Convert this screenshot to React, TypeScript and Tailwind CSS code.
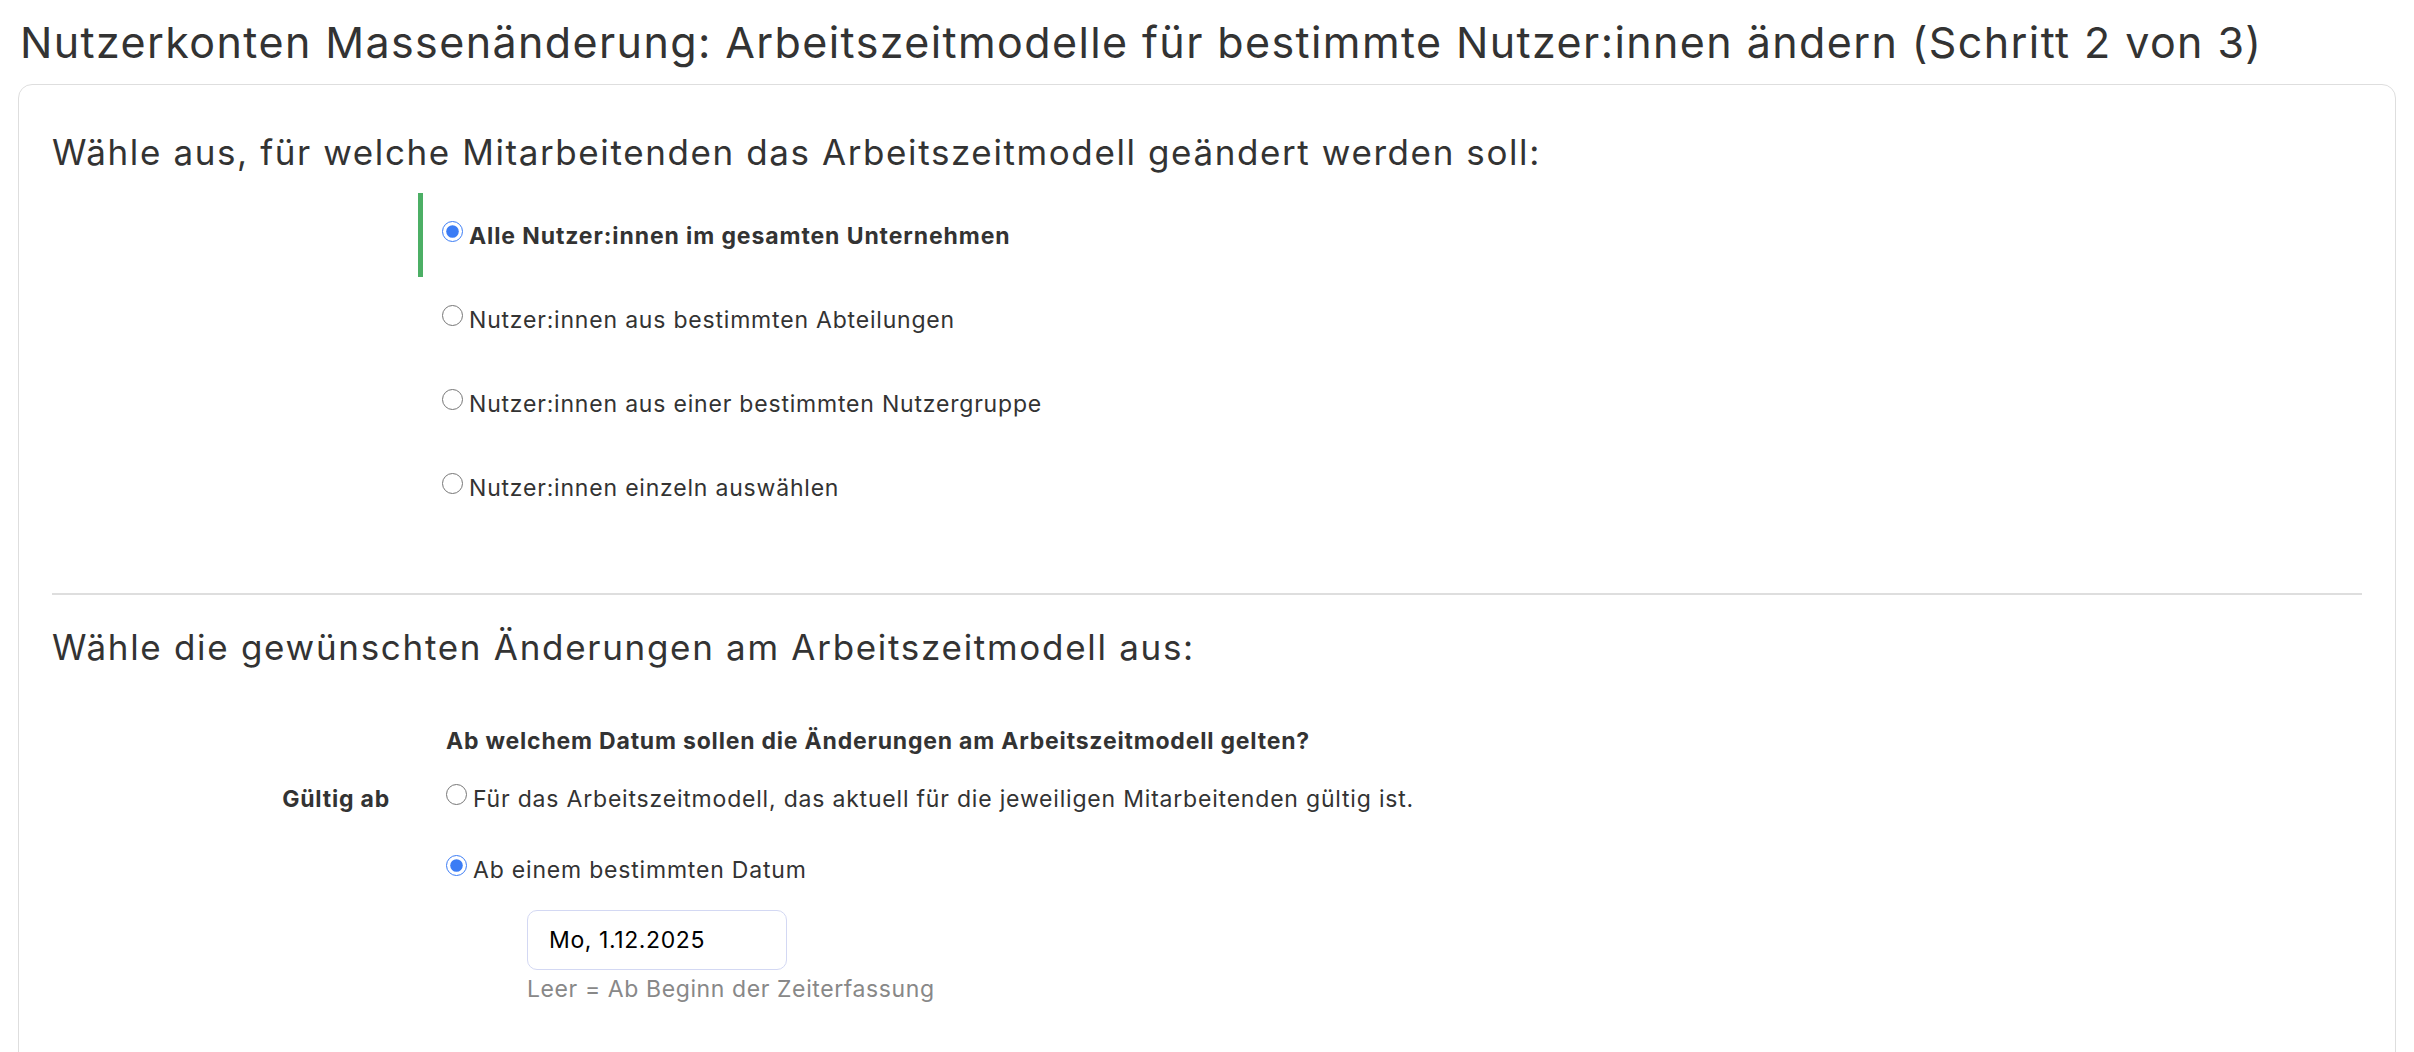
import React from "react";

const font = { fontFamily: "Inter, 'Noto Sans', sans-serif" };

function Radio({ checked, label, bold }: { checked?: boolean; label: string; bold?: boolean }) {
  return (
    <label className="flex items-start gap-[6px]">
      <input
        type="radio"
        defaultChecked={checked}
        className="mt-[2px] h-[21px] w-[21px] shrink-0 accent-[#3b7cf5]"
      />
      <span
        className={
          bold
            ? "font-bold text-[23px] tracking-[0.9px] text-[#333]"
            : "text-[23px] tracking-[0.8px] text-[#333]"
        }
      >
        {label}
      </span>
    </label>
  );
}

export default function App() {
  return (
    <div className="min-h-screen bg-white px-[18px] pt-[10px]" style={font}>
      <h1 className="pl-[2px] text-[43px] leading-[64px] tracking-[1.4px] text-[#333]">
        Nutzerkonten Massenänderung: Arbeitszeitmodelle für bestimmte Nutzer:innen ändern (Schritt 2 von 3)
      </h1>

      <div className="mt-[10px] rounded-[14px] border border-[#dedede] px-[33px] pt-[42px] pb-24">
        {/* Mitarbeitende */}
        <h2 className="text-[35px] leading-[50px] tracking-[1.6px] text-[#333]">
          Wähle aus, für welche Mitarbeitenden das Arbeitszeitmodell geändert werden soll:
        </h2>
        <div className="ml-[366px] mt-[16px] flex flex-col">
          <div className="border-l-[5px] border-[#4caf65] pl-[19px] h-[84px] pt-[26px]">
            <Radio checked bold label="Alle Nutzer:innen im gesamten Unternehmen" />
          </div>
          <div className="pl-[24px] h-[84px] pt-[26px]">
            <Radio label="Nutzer:innen aus bestimmten Abteilungen" />
          </div>
          <div className="pl-[24px] h-[84px] pt-[26px]">
            <Radio label="Nutzer:innen aus einer bestimmten Nutzergruppe" />
          </div>
          <div className="pl-[24px] h-[84px] pt-[26px]">
            <Radio label="Nutzer:innen einzeln auswählen" />
          </div>
        </div>

        <hr className="mt-[64px] border-t-2 border-[#dedede]" />

        {/* Änderungen */}
        <h2 className="mt-[27px] text-[35px] leading-[50px] tracking-[1.7px] text-[#333]">
          Wähle die gewünschten Änderungen am Arbeitszeitmodell aus:
        </h2>

        <div className="mt-[52px] ml-[394px] text-[23px] font-bold tracking-[0.8px] text-[#333]">
          Ab welchem Datum sollen die Änderungen am Arbeitszeitmodell gelten?
        </div>
        <div className="mt-[23px] flex">
          <div className="w-[338px] text-right text-[23px] font-bold tracking-[0.8px] text-[#333]">
            Gültig ab
          </div>
          <div className="ml-[56px] flex flex-col gap-[37px]">
            <Radio label="Für das Arbeitszeitmodell, das aktuell für die jeweiligen Mitarbeitenden gültig ist." />
            <Radio checked label="Ab einem bestimmten Datum" />
          </div>
        </div>
        <div className="ml-[475px] mt-[22px]">
          <input
            defaultValue="Mo, 1.12.2025"
            className="h-[60px] w-[260px] rounded-[10px] border border-[#d3d8f3] px-[21px] text-[23px] tracking-[0.6px] text-black outline-none"
          />
          <div className="mt-[2px] text-[23px] tracking-[0.6px] text-[#888]">
            Leer = Ab Beginn der Zeiterfassung
          </div>
        </div>
      </div>
    </div>
  );
}
